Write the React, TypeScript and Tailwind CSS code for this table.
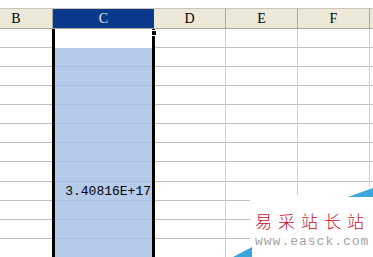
import React from 'react';

const ROWS = [19, 19, 19, 19, 19, 19, 19, 20, 19, 19, 19, 19];
const mono = { fontFamily: '"Liberation Mono", "Courier New", monospace' };
const serif = { fontFamily: '"Liberation Serif", "Times New Roman", serif' };

function PlainColumn({ width }: { width: string }) {
  return (
    <div className={`${width} shrink-0 flex flex-col border-r border-[#d0d0d0]`}>
      {ROWS.map((h, i) => (
        <div key={i} className="border-b border-[#c0c0c0] shrink-0" style={{ height: h }} />
      ))}
    </div>
  );
}

export default function App() {
  return (
    <div className="relative w-[373px] h-[257px] overflow-hidden bg-white" style={mono}>
      {/* top gap */}
      <div className="h-[9px] bg-white border-b border-[#c9c6b8]" />

      {/* column headers */}
      <div
        className="flex h-[20px] bg-[#ece9d8] border-b border-[#aca899] text-[14px] leading-[20px] text-black"
        style={serif}
      >
        <div className="w-[73px] -ml-[20px] shrink-0 text-center border-r border-[#aca899]">B</div>
        <div className="w-[101px] shrink-0 text-center bg-[#0b3a8c] text-[#dfe8f6]">C</div>
        <div className="w-[72px] shrink-0 text-center border-r border-[#aca899]">D</div>
        <div className="w-[72px] shrink-0 text-center border-r border-[#aca899]">E</div>
        <div className="w-[72px] shrink-0 text-center border-r border-[#aca899]">F</div>
        <div className="flex-1" />
      </div>

      {/* cells */}
      <div className="flex">
        <div className="w-[52px] shrink-0 flex flex-col">
          {ROWS.map((h, i) => (
            <div key={i} className="border-b border-[#c0c0c0] shrink-0" style={{ height: h }} />
          ))}
        </div>

        {/* selected column C */}
        <div className="w-[103px] shrink-0 flex flex-col border-x-[3px] border-black">
          {ROWS.map((h, i) => (
            <div
              key={i}
              className={`shrink-0 flex items-end justify-end pr-[1px] text-[13px] leading-[16px] text-black ${
                i === 0 ? 'bg-white' : 'bg-[#b6cae9] border-b border-[#a9bfe2]'
              }`}
              style={{ height: h }}
            >
              {i === 8 ? '3.40816E+17' : null}
            </div>
          ))}
        </div>

        <PlainColumn width="w-[71px]" />
        <PlainColumn width="w-[72px]" />
        <PlainColumn width="w-[72px]" />
        <div className="flex-1 flex flex-col">
          {ROWS.map((h, i) => (
            <div key={i} className="border-b border-[#c0c0c0] shrink-0" style={{ height: h }} />
          ))}
        </div>
      </div>

      {/* fill handle */}
      <div className="absolute left-[151px] top-[30px] w-[6px] h-[6px] bg-black border border-white" />

      {/* watermark */}
      <div className="absolute left-[233px] top-[185px] w-[140px] h-[72px]">
        <div className="absolute inset-0 bg-white [clip-path:polygon(17px_15px,140px_1px,140px_72px,17px_72px)]" />
        <div className="absolute inset-0 bg-[#3aa6dc] [clip-path:polygon(0px_72px,19px_62px,19px_72px)]" />
        <div className="absolute inset-0 bg-[#3aa6dc] [clip-path:polygon(115px_12px,140px_3px,140px_12px)]" />
        <div
          className="absolute left-[22px] top-[26px] text-[17px] leading-[20px] tracking-[6px] text-[#c8102e] whitespace-nowrap"
          style={{ fontFamily: '"Noto Sans CJK SC", sans-serif', fontWeight: 300 }}
        >
          易采站长站
        </div>
        <div className="absolute left-[22px] top-[49px] text-[13px] leading-[16px] tracking-[1px] text-[#a3a3a3] whitespace-nowrap" style={mono}>
          www.easck.com
        </div>
      </div>
    </div>
  );
}
